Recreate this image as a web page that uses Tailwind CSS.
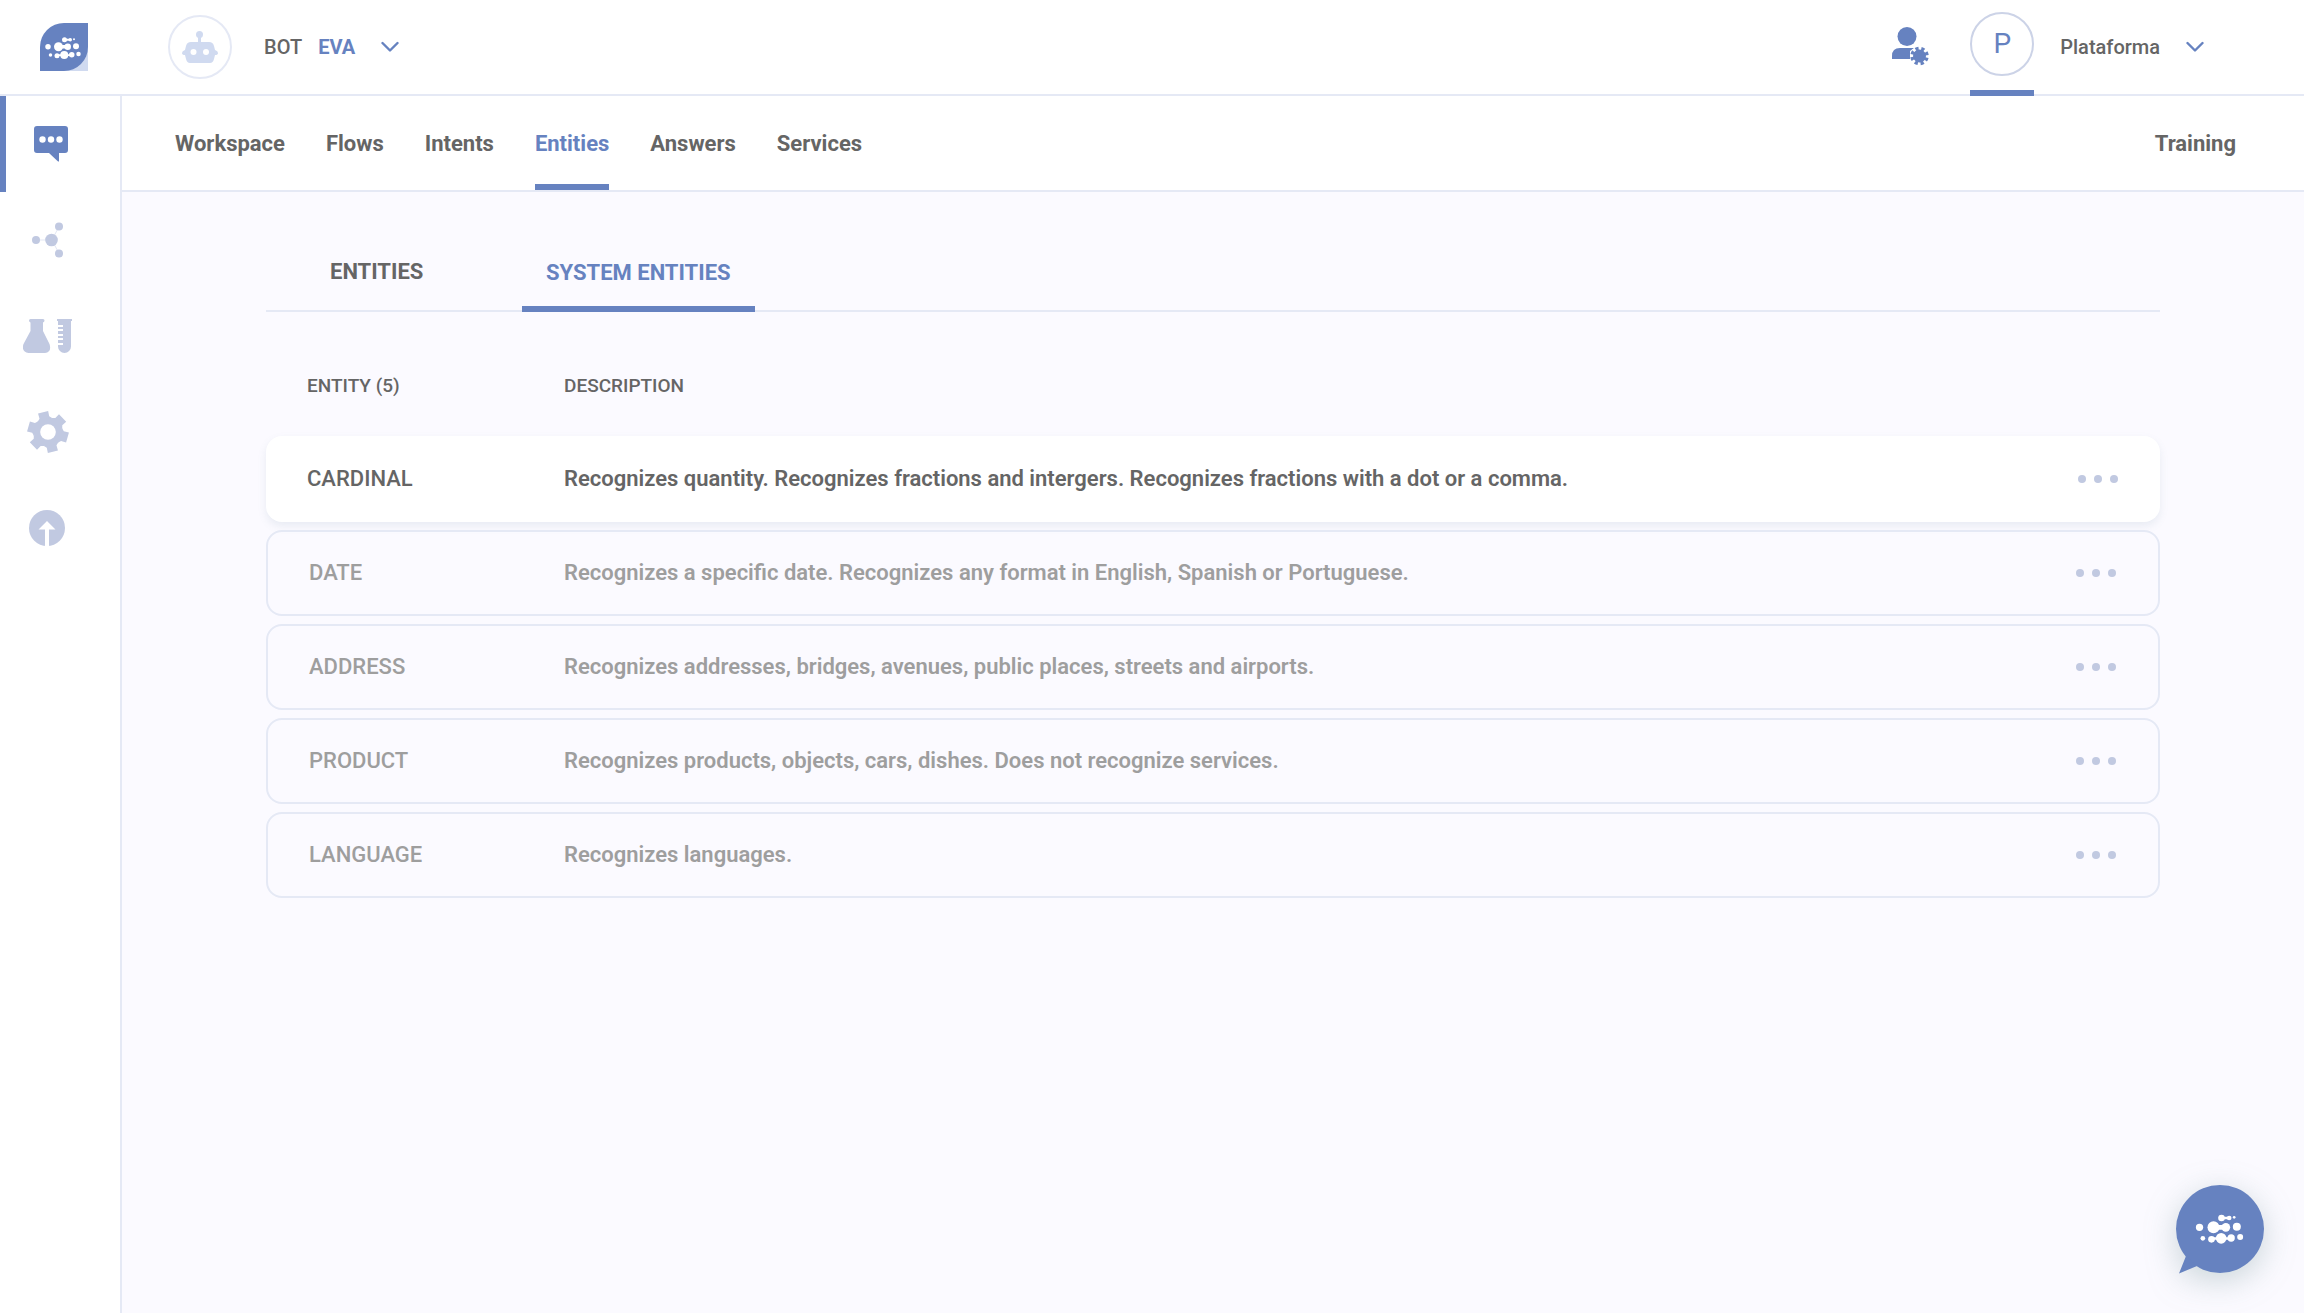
<!DOCTYPE html>
<html lang="en">
<head>
  <meta charset="UTF-8">
  <meta name="viewport" content="width=device-width, initial-scale=1">
  <title>Entities</title>
  <script src="https://cdn.jsdelivr.net/npm/@tailwindcss/browser@4"></script>
</head>
<body class="bg-[#fbfaff] text-[#656565] font-['Roboto',sans-serif] min-h-screen flex flex-col">

  <!-- Shared shapes -->
  <svg class="hidden">
    <symbol id="mark" viewBox="136 160 144 94">
      <g fill="#fff">
        <circle cx="148" cy="202" r="11"/>
        <circle cx="190" cy="202" r="18"/>
        <circle cx="227" cy="202" r="13"/>
        <path d="M200 195h24v14h-24z"/>
        <circle cx="260" cy="200" r="12"/>
        <circle cx="214" cy="174" r="10"/>
        <circle cx="237" cy="174" r="7"/>
        <circle cx="252" cy="172" r="4"/>
        <path d="M214 170h24v8h-24z"/>
        <circle cx="158" cy="235" r="7"/>
        <circle cx="184" cy="238" r="10"/>
        <circle cx="213" cy="235" r="16"/>
        <circle cx="243" cy="234" r="11"/>
        <path d="M184 232h60v7h-60z"/>
        <circle cx="270" cy="231" r="9"/>
      </g>
    </symbol>
    <symbol id="chevron" viewBox="0 0 18 12">
      <path d="M1.500 2 9 9.500 16.500 2" fill="none" stroke="#6682c0" stroke-width="2.400" stroke-linecap="round" stroke-linejoin="round"/>
    </symbol>
    <symbol id="dots" viewBox="0 0 40 8">
      <g fill="#c1c9e1">
        <circle cx="4" cy="4" r="4"/>
        <circle cx="20" cy="4" r="4"/>
        <circle cx="36" cy="4" r="4"/>
      </g>
    </symbol>
  </svg>

  <!-- Header -->
  <header class="bg-white h-24 border-b-2 border-[#e5e9f5] flex items-center justify-between pl-10 pr-25">
    <div class="flex items-center">
      <a href="#" aria-label="Home" class="mr-20">
        <svg class="size-12" viewBox="0 0 48 48">
          <path d="M24 24h24v24H24z" fill="#d0daf0"/>
          <path d="M24 0H48V24A24 24 0 0 1 24 48H0V24A24 24 0 0 1 24 0Z" fill="#6682c0"/>
          <use href="#mark" x="5" y="13" width="36" height="24"/>
        </svg>
      </a>
      <span class="size-16 rounded-full border-2 border-[#e5e9f5] flex items-center justify-center mr-8">
        <svg class="w-9 h-8" viewBox="0 0 36 32">
          <g fill="#d0daf0">
            <circle cx="17.500" cy="3.500" r="3.500"/>
            <path d="M16 4h3v9h-3z"/>
            <path d="M9 11H27Q31 11 32 15L33 19Q36 20 36 22T33 24L32 28Q31 32 28 32H8Q5 32 4 28L3 24Q0 24 0 22T3 19L4 15Q5 11 9 11Z"/>
          </g>
          <circle cx="11.500" cy="21" r="3" fill="#fff"/>
          <circle cx="24" cy="21" r="3" fill="#fff"/>
        </svg>
      </span>
      <button class="flex items-center text-[20px] leading-6">
        <span class="font-medium mr-4">BOT</span>
        <span class="font-bold text-[#6682c0] mr-[26px]">EVA</span>
        <svg class="w-[18px] h-3"><use href="#chevron"/></svg>
      </button>
    </div>
    <div class="flex items-center self-stretch">
      <button aria-label="User settings" class="mr-10">
        <svg class="size-10" viewBox="0 0 40 40">
          <g fill="#6682c0">
            <circle cx="17" cy="9.500" r="9.500"/>
            <path d="M2 32V29Q2 21 10 21H24L20 24V32Z"/>
          </g>
          <circle cx="29.500" cy="29" r="9.500" fill="#fff"/>
          <g transform="rotate(12 29.500 29)">
            <circle cx="29.500" cy="29" r="6.500" fill="#6682c0"/>
            <circle cx="29.500" cy="29" r="7.500" fill="none" stroke="#6682c0" stroke-width="3.500" stroke-dasharray="3.200 2.690"/>
          </g>
        </svg>
      </button>
      <a href="#" class="self-stretch flex flex-col justify-between -mb-0.5 pt-3 border-b-6 border-[#6682c0] mr-[26px]">
        <span class="size-16 rounded-full border-2 border-[#ccd3e7] flex items-center justify-center text-[28px] text-[#6682c0]">P</span>
      </a>
      <button class="flex items-center text-[20px] leading-6">
        <span class="font-medium mr-[26px]">Plataforma</span>
        <svg class="w-[18px] h-3"><use href="#chevron"/></svg>
      </button>
    </div>
  </header>

  <div class="flex flex-1">

    <!-- Sidebar -->
    <aside class="bg-white w-[122px] shrink-0 border-r-2 border-[#e5e9f5] flex flex-col">
      <a href="#" aria-label="Chat" class="h-24 border-l-6 border-[#6682c0] flex items-center pl-7">
        <svg class="w-[34px] h-9" viewBox="0 0 34 36">
          <path d="M3 0H31Q34 0 34 3V24Q34 27 31 27H25V35Q25 36 23.500 35L15 27H3Q0 27 0 24V3Q0 0 3 0Z" fill="#6682c0"/>
          <g fill="#fff">
            <circle cx="8.500" cy="13.500" r="3.200"/>
            <circle cx="17" cy="13.500" r="3.200"/>
            <circle cx="25.500" cy="13.500" r="3.200"/>
          </g>
        </svg>
      </a>
      <a href="#" aria-label="Channels" class="h-24 flex items-center pl-8">
        <svg class="w-8 h-9" viewBox="0 0 32 36">
          <path d="M4 18H20M20 18 27 4.500M20 18 27 31.500" stroke="#e3e7f4" stroke-width="1"/>
          <g fill="#c1c9e1">
            <circle cx="4" cy="18" r="4"/>
            <circle cx="19.500" cy="18" r="6.300"/>
            <circle cx="27" cy="4.500" r="4"/>
            <circle cx="27" cy="31.500" r="4"/>
          </g>
        </svg>
      </a>
      <a href="#" aria-label="Tests" class="h-24 flex items-center pl-[23px]">
        <svg class="w-[50px] h-[34px]" viewBox="0 0 50 34">
          <g fill="#c1c9e1">
            <path d="M7.500 0H20Q21.500 0 21.500 1.500T20 3.500V12L26.500 25Q29 33 22 34H5.500Q-2 33 .500 25L7.500 12V3.500Q6 3 6 1.500T7.500 0Z"/>
            <path d="M34 0H49V2H48V27.500A6.500 6.500 0 0 1 35 27.500V2H34Z"/>
          </g>
          <path d="M34.500 7H40M34.500 11H40M34.500 16H40M34.500 20H40M34.500 25H40" stroke="#fff" stroke-width="1.800"/>
        </svg>
      </a>
      <a href="#" aria-label="Settings" class="h-24 flex items-center pl-[27px]">
        <svg class="size-[42px]" viewBox="-21 -21 42 42">
          <g fill="#c1c9e1" transform="rotate(-14)">
            <path id="tooth" d="M-5.200 -20.300H5.200L5 -15L8 -12H-8L-5 -15Z"/>
            <use href="#tooth" transform="rotate(60)"/>
            <use href="#tooth" transform="rotate(120)"/>
            <use href="#tooth" transform="rotate(180)"/>
            <use href="#tooth" transform="rotate(240)"/>
            <use href="#tooth" transform="rotate(300)"/>
            <circle r="14"/>
          </g>
          <circle r="7.800" fill="#fff"/>
        </svg>
      </a>
      <a href="#" aria-label="Publish" class="h-24 flex items-center pl-[29px]">
        <svg class="size-9" viewBox="0 0 36 36">
          <circle cx="18" cy="18" r="18" fill="#c1c9e1"/>
          <path d="M18 11 26.500 19.500H20V36H16V19.500H9.500Z" fill="#fff"/>
        </svg>
      </a>
    </aside>

    <div class="flex-1">

      <!-- Main navigation -->
      <nav class="bg-white h-24 border-b-2 border-[#e5e9f5] flex items-stretch justify-between pl-[53px] pr-[68px] text-[22px] font-bold">
        <div class="flex gap-[41px]">
          <a href="#" class="flex items-center">Workspace</a>
          <a href="#" class="flex items-center">Flows</a>
          <a href="#" class="flex items-center">Intents</a>
          <a href="#" class="flex items-center text-[#6682c0] border-b-6 border-[#6682c0] pt-1.5">Entities</a>
          <a href="#" class="flex items-center">Answers</a>
          <a href="#" class="flex items-center">Services</a>
        </div>
        <a href="#" class="flex items-center">Training</a>
      </nav>

      <main class="pt-10 pl-36 pr-36">

        <!-- Tabs -->
        <div class="h-20 border-b-2 border-[#e5e9f5] flex text-[22px] font-bold">
          <button class="w-64 pl-16 text-left">ENTITIES</button>
          <button class="px-6 -mb-0.5 pt-1.5 border-b-6 border-[#6682c0] text-[#6682c0]">SYSTEM ENTITIES</button>
        </div>

        <!-- Entities list -->
        <table class="block mt-15 font-medium text-left">
          <thead class="block text-[19px] leading-7">
            <tr class="grid grid-cols-[298px_1fr]">
              <th class="pl-[41px] font-medium">ENTITY (5)</th>
              <th class="font-medium">DESCRIPTION</th>
            </tr>
          </thead>
          <tbody class="flex flex-col gap-2 mt-9 text-[22px] leading-7 font-semibold text-[#9e9e9e]">
            <tr class="h-[86px] grid grid-cols-[298px_1fr_82px] items-center rounded-2xl bg-white text-[#656565] shadow-[0_4px_8px_rgba(102,130,160,0.12)]">
              <td class="pl-[41px] font-medium">CARDINAL</td>
              <td>Recognizes quantity. Recognizes fractions and intergers. Recognizes fractions with a dot or a comma.</td>
              <td><button aria-label="Options" class="block"><svg class="w-10 h-2"><use href="#dots"/></svg></button></td>
            </tr>
            <tr class="h-[86px] grid grid-cols-[296px_1fr_82px] items-center rounded-2xl border-2 border-[#e5e9f5]">
              <td class="pl-[41px] font-medium">DATE</td>
              <td>Recognizes a specific date. Recognizes any format in English, Spanish or Portuguese.</td>
              <td><button aria-label="Options" class="block"><svg class="w-10 h-2"><use href="#dots"/></svg></button></td>
            </tr>
            <tr class="h-[86px] grid grid-cols-[296px_1fr_82px] items-center rounded-2xl border-2 border-[#e5e9f5]">
              <td class="pl-[41px] font-medium">ADDRESS</td>
              <td>Recognizes addresses, bridges, avenues, public places, streets and airports.</td>
              <td><button aria-label="Options" class="block"><svg class="w-10 h-2"><use href="#dots"/></svg></button></td>
            </tr>
            <tr class="h-[86px] grid grid-cols-[296px_1fr_82px] items-center rounded-2xl border-2 border-[#e5e9f5]">
              <td class="pl-[41px] font-medium">PRODUCT</td>
              <td>Recognizes products, objects, cars, dishes. Does not recognize services.</td>
              <td><button aria-label="Options" class="block"><svg class="w-10 h-2"><use href="#dots"/></svg></button></td>
            </tr>
            <tr class="h-[86px] grid grid-cols-[296px_1fr_82px] items-center rounded-2xl border-2 border-[#e5e9f5]">
              <td class="pl-[41px] font-medium">LANGUAGE</td>
              <td>Recognizes languages.</td>
              <td><button aria-label="Options" class="block"><svg class="w-10 h-2"><use href="#dots"/></svg></button></td>
            </tr>
          </tbody>
        </table>
      </main>
    </div>
  </div>

  <!-- Chat bubble -->
  <button aria-label="Open chat" class="fixed right-10 bottom-10">
    <svg class="size-[88px] overflow-visible drop-shadow-[0_8px_16px_rgba(90,130,130,0.3)]" viewBox="0 0 88 88">
      <circle cx="44" cy="44" r="44" fill="#6682c0"/>
      <path d="M10 71 3 88.500 21 81Z" fill="#6682c0"/>
      <use href="#mark" x="19.500" y="28" width="48" height="32"/>
    </svg>
  </button>
</body>
</html>
